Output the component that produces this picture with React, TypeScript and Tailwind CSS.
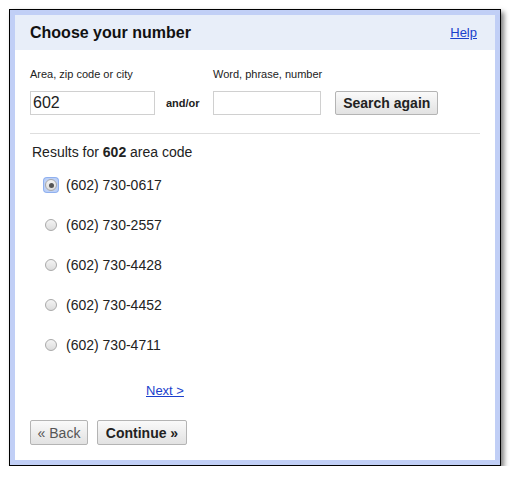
import React from "react";

const numbers = [
  "(602) 730-0617",
  "(602) 730-2557",
  "(602) 730-4428",
  "(602) 730-4452",
  "(602) 730-4711",
];

function Radio({ checked }: { checked?: boolean }) {
  return (
    <span
      className={`flex h-[14px] w-[14px] items-center justify-center rounded-[3px] ${
        checked ? "bg-[#bcd0f7] ring-1 ring-[#8fb0ef]" : ""
      }`}
    >
      <span className="flex h-[12px] w-[12px] items-center justify-center rounded-full border border-[#a9a9a9] bg-gradient-to-b from-[#f4f4f4] to-[#dcdcdc]">
        {checked && <span className="h-[5px] w-[5px] rounded-full bg-[#555]" />}
      </span>
    </span>
  );
}

const btn =
  "rounded-[2px] border border-[#b4b4b4] bg-gradient-to-b from-[#fafafa] to-[#e2e2e2] text-[14px] leading-none";

export default function App() {
  return (
    <div
      className="pl-[9px] pt-[9px] text-[#222]"
      style={{ fontFamily: '"Liberation Sans", Arial, sans-serif' }}
    >
      <div className="h-[457px] w-[492px] border border-black bg-[#c1cff6] p-[5px] shadow-[3px_3px_5px_rgba(0,0,0,0.5)]">
        <div className="flex h-full flex-col bg-white">
          <div className="flex h-[35px] items-center justify-between bg-[#e8eef9] px-[15px]">
            <span className="text-[16px] font-bold text-[#111]">Choose your number</span>
            <a href="#" className="mr-[3px] text-[13px] text-[#1a3fcc] underline">
              Help
            </a>
          </div>

          <div className="px-[15px]">
            <div className="mt-[18px] flex items-end">
              <div className="flex flex-col">
                <span className="text-[11px] leading-[13px]">Area, zip code or city</span>
                <input
                  defaultValue="602"
                  className="mt-[10px] h-[24px] w-[125px] border border-[#d0d0d0] px-[2px] text-[16px] text-[#222] outline-none"
                />
              </div>
              <span className="mb-[4px] ml-[11px] w-[47px] text-[11px] font-bold">and/or</span>
              <div className="flex flex-col">
                <span className="text-[11px] leading-[13px]">Word, phrase, number</span>
                <input className="mt-[10px] h-[24px] w-[108px] border border-[#d0d0d0] px-[2px] text-[16px] outline-none" />
              </div>
              <button className={`${btn} ml-[13px] h-[24px] w-[103px] font-bold text-[#222]`}>
                Search again
              </button>
            </div>

            <div className="mt-[18px] border-t border-[#dedede]" />

            <div className="mt-[9px] pl-[2px] text-[14px] leading-[18px]">
              Results for <b>602</b> area code
            </div>

            <div className="mt-[4px] flex flex-col">
              {numbers.map((n, i) => (
                <label key={n} className="flex h-[40px] items-center pl-[14px]">
                  <Radio checked={i === 0} />
                  <span className="ml-[8px] text-[14px]">{n}</span>
                </label>
              ))}
            </div>

            <div className="mt-[13px] pl-[116px]">
              <a href="#" className="text-[13px] text-[#1a3fcc] underline">
                Next &gt;
              </a>
            </div>

            <div className="mt-[18px] flex gap-[9px]">
              <button className={`${btn} h-[25px] w-[58px] text-[#555]`}>« Back</button>
              <button className={`${btn} h-[25px] w-[90px] font-bold text-[#222]`}>
                Continue »
              </button>
            </div>
          </div>
        </div>
      </div>
    </div>
  );
}
